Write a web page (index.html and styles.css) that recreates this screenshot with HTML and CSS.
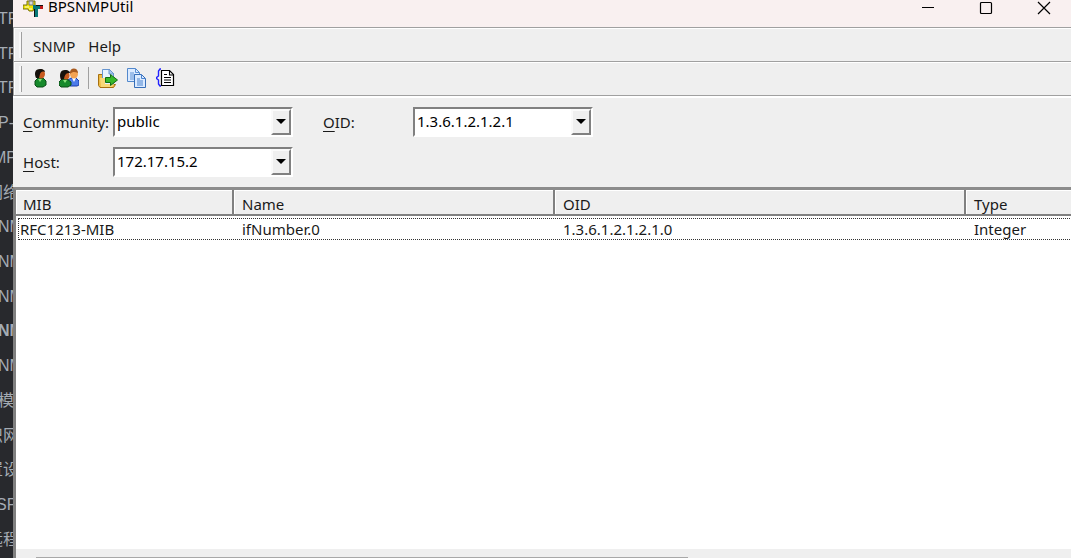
FILE: index.html
```html
<!DOCTYPE html>
<html lang="en">
<head>
  <meta charset="UTF-8">
  <meta name="viewport" content="width=device-width, initial-scale=1.0">
  <title>BPSNMPUtil</title>
  <link rel="stylesheet" href="styles.css">
</head>
<body>
  <ul class="backdrop">
    <li>TP</li>
    <li>TP</li>
    <li>TP</li>
    <li>P-</li>
    <li class="cut">MP</li>
    <li class="cjk">网络</li>
    <li>NM</li>
    <li>NM</li>
    <li>NM</li>
    <li class="active">NM</li>
    <li>NM</li>
    <li>模</li>
    <li class="cjk">识网</li>
    <li class="cjk">置设</li>
    <li class="cut-small">SP</li>
    <li class="cjk">远程</li>
  </ul>

  <main class="window">
    <header class="titlebar">
      <svg class="app-icon" viewBox="0 0 20 20" aria-hidden="true">
        <path d="M0 8h4V4h8v5l-2 5H6l-1-2H0z" fill="#f2e600" stroke="#77700d"/>
        <path d="M6 4h4v4H6z" fill="#d8d8d8" stroke="#777"/>
        <path d="M2 10h4M6 12h3" stroke="#fffbd0"/>
        <path d="M10 8h10v4h-5v8h-3v-8h-2z" fill="#087878"/>
        <path d="M13 8h7v1h-7zM11 12h1v8h-1z" fill="#101010"/>
        <path d="M17 9h3v3h-3z" fill="#c01818"/>
      </svg>
      <h1 class="title">BPSNMPUtil</h1>
      <button class="caption-btn" aria-label="Minimize">
        <svg viewBox="0 0 14 14"><path d="M1 6.500h12" stroke="#000"/></svg>
      </button>
      <button class="caption-btn" aria-label="Maximize">
        <svg viewBox="0 0 14 14"><rect x="1.500" y="1.500" width="11" height="11" rx="1" fill="none" stroke="#000" stroke-width="1.200"/></svg>
      </button>
      <button class="caption-btn" aria-label="Close">
        <svg viewBox="0 0 14 14"><path d="M1 1l12 12M13 1L1 13" stroke="#000" stroke-width="1.200"/></svg>
      </button>
    </header>

    <nav class="bar">
      <span class="grip"></span>
      <button class="menu-btn">SNMP</button>
      <button class="menu-btn">Help</button>
    </nav>

    <div class="bar">
      <span class="grip"></span>
      <button class="tool-btn" aria-label="Get">
        <svg viewBox="0 0 20 20">
          <path d="M5 17v-4l3-3h5l3 3v4l-3 2H7z" fill="#178a2c" stroke="#0b4d17"/>
          <path d="M8 11h4l-2 3z" fill="#8be07b"/>
          <ellipse cx="11" cy="6" rx="4" ry="4.500" fill="#c75b1f"/>
          <path d="M6 10c-2-5-1-9 4-9 4 0 5 2 5 3-3-1-4 0-5 2l-1 4z" fill="#16110c"/>
        </svg>
      </button>
      <button class="tool-btn" aria-label="Get all">
        <svg viewBox="0 0 20 20">
          <path d="M9 16v-4l3-2h5l3 3v4l-2 1h-7z" fill="#4b7bea" stroke="#1a3fad"/>
          <path d="M13 10h4l-2 4z" fill="#fff"/>
          <ellipse cx="15" cy="6" rx="4" ry="4.500" fill="#f4a352"/>
          <path d="M11 6c-1-7 8-7 8-1-3-1-5-2-8 1z" fill="#a85a1e"/>
          <path d="M0 17v-3l3-3h5l4 3v3l-3 2H2z" fill="#178a2c" stroke="#0b4d17"/>
          <path d="M4 12h4l-2 3z" fill="#8be07b"/>
          <ellipse cx="7" cy="7.500" rx="3.500" ry="4" fill="#c75b1f"/>
          <path d="M2 12c-2-5-1-10 4-10 4 0 5 2 5 3-4 0-5 1-6 6z" fill="#16110c"/>
        </svg>
      </button>
      <span class="separator"></span>
      <button class="tool-btn" aria-label="Export">
        <svg viewBox="0 0 20 20">
          <path d="M.5 6.500h4v10h13l-2 3H2l-1.500-2z" fill="#eebb45" stroke="#a7700f"/>
          <path d="M4.500 1.500h7l4 4v11h-11z" fill="#e8f3ff" stroke="#6795cf"/>
          <path d="M11 1v5h5z" fill="#a9c9f0" stroke="#6795cf"/>
          <path d="M2 10h5v6h9l-2 3H3z" fill="#f8d878"/>
          <path d="M7.500 9.500h5v-3l7 5.500-7 5.500v-3h-5z" fill="#36b928" stroke="#126c15"/>
        </svg>
      </button>
      <button class="tool-btn" aria-label="Copy">
        <svg viewBox="0 0 20 20">
          <path d="M.5.500h8l4 4v9H.500z" fill="#dcebff" stroke="#5288cc"/>
          <path d="M8.500.500v4h4M3 5h4M3 7h6M3 9h6M3 11h6" fill="none" stroke="#5c91d6"/>
          <path d="M7.500 6.500h7l4 4v9h-11z" fill="#dcebff" stroke="#376eb8"/>
          <path d="M14.500 6.500v4h4M10 11h3M10 13h6M10 15h6M10 17h6" fill="none" stroke="#4b83ce"/>
        </svg>
      </button>
      <button class="tool-btn" aria-label="View details">
        <svg viewBox="0 0 20 20">
          <path d="M5 1H4L2.500 3v5L0 10l2.500 2v4L4 18h1" fill="none" stroke="#2222ff" stroke-width="1.400"/>
          <path d="M5.500 2.500h8l4 4v11h-12z" fill="#fff" stroke="#000" stroke-width="1.200"/>
          <path d="M13.500 3v4h4M8 6.500h3M8 9.500h7M8 12h7M8 14.500h7" fill="none" stroke="#000" stroke-width="1.100"/>
        </svg>
      </button>
    </div>

    <form class="query">
      <label for="community"><u>C</u>ommunity:</label>
      <span class="combo">
        <select id="community"><option>public</option></select>
      </span>
      <label for="oid" class="label-oid"><u>O</u>ID:</label>
      <span class="combo">
        <select id="oid"><option>1.3.6.1.2.1.2.1</option></select>
      </span>
      <label for="host"><u>H</u>ost:</label>
      <span class="combo">
        <select id="host"><option>172.17.15.2</option></select>
      </span>
    </form>

    <section class="results">
      <table>
        <thead>
          <tr>
            <th>MIB</th>
            <th>Name</th>
            <th>OID</th>
            <th>Type</th>
          </tr>
        </thead>
        <tbody>
          <tr>
            <td>RFC1213-MIB</td>
            <td>ifNumber.0</td>
            <td>1.3.6.1.2.1.2.1.0</td>
            <td>Integer</td>
          </tr>
        </tbody>
      </table>
      <div class="scrollbar"><div class="thumb"></div></div>
    </section>
  </main>
</body>
</html>
```
FILE: styles.css
```css
* {
  box-sizing: border-box;
  margin: 0;
  padding: 0;
}

body {
  display: flex;
  height: 100vh;
  overflow: hidden;
  background: #28292d;
  color: #1a1a1a;
  font-family: "Noto Sans", Tahoma, "Noto Sans CJK SC", sans-serif;
  font-size: 15px;
  line-height: 20px;
}

button,
select {
  font: inherit;
  color: inherit;
  border: none;
  background: none;
}

/* Window behind, only its right edge shows */
.backdrop {
  width: 13px;
  flex-shrink: 0;
  padding: 9px 0 8px;
  display: flex;
  flex-direction: column;
  justify-content: space-between;
  overflow: hidden;
  list-style: none;
  white-space: nowrap;
  color: #a4abb3;
  font-family: "Liberation Sans", "Noto Sans CJK SC", sans-serif;
  font-size: 16px;
}

.backdrop li {
  margin-left: -2px;
}

.backdrop .cut {
  margin-left: -7px;
}

.backdrop .cut-small {
  margin-left: -4px;
}

.backdrop .cjk {
  margin-left: -13px;
}

.backdrop .active {
  font-weight: 700;
}

.window {
  flex: 1;
  min-width: 0;
  display: flex;
  flex-direction: column;
  background: #efefef;
}

/* Title bar */
.titlebar {
  display: flex;
  align-items: flex-start;
  height: 27px;
  padding-left: 10px;
  background: #f9f0f0;
}

.app-icon {
  width: 20px;
  height: 20px;
  margin-top: -3px;
}

.title {
  flex: 1;
  margin-left: 5px;
  font-size: 15px;
  font-weight: 400;
  line-height: 13px;
  color: #000;
}

.caption-btn {
  width: 54px;
  height: 16px;
  margin-left: 4px;
  display: flex;
  justify-content: center;
  align-items: center;
}

.caption-btn svg {
  width: 14px;
  height: 14px;
}

/* Menu and toolbar */
.bar {
  display: flex;
  align-items: center;
  height: 34px;
  padding: 4px 5px 3px;
  border-top: 1px solid #a0a0a0;
  border-left: 1px solid #a0a0a0;
  box-shadow: inset 1px 1px #fff;
}

.grip {
  width: 3px;
  height: 26px;
  margin-right: 8px;
  background: #f8f8f8;
  border-right: 1px solid #a0a0a0;
}

.menu-btn {
  padding: 1px 3px 0;
  margin-right: 7px;
}

.tool-btn {
  width: 20px;
  height: 20px;
  margin: 0 9px 3px 0;
}

.tool-btn svg {
  display: block;
  width: 20px;
  height: 20px;
}

.separator {
  width: 1px;
  height: 22px;
  margin: 0 9px 3px 0;
  background: #a0a0a0;
}

/* Query form */
.query {
  display: grid;
  grid-template-columns: 90px 180px 120px 180px;
  grid-auto-rows: 30px;
  row-gap: 10px;
  align-items: center;
  padding: 11px 10px 10px;
  border-top: 1px solid #a0a0a0;
  box-shadow: inset 0 2px #fff;
}

.query u {
  text-underline-offset: 3px;
}

.label-oid {
  padding-left: 30px;
}

.combo {
  position: relative;
  height: 30px;
  border: 2px solid;
  border-color: #808080 #fff #fff #808080;
}

.combo select {
  width: 100%;
  height: 100%;
  padding: 0 24px 2px 2px;
  appearance: none;
  background: #fff;
  color: #000;
  outline: none;
}

.combo::before {
  content: "";
  box-sizing: border-box;
  position: absolute;
  top: 0;
  right: 0;
  width: 20px;
  height: 26px;
  background: #efefef;
  border: 2px solid;
  border-color: #fafafa #808080 #808080 #fafafa;
  pointer-events: none;
  z-index: 1;
}

.combo::after {
  content: "";
  position: absolute;
  top: 10px;
  right: 5px;
  border: 5px solid transparent;
  border-top-color: #000;
  border-bottom: none;
  pointer-events: none;
  z-index: 2;
}

/* Results list */
.results {
  flex: 1;
  min-height: 0;
  display: flex;
  flex-direction: column;
  background: #fff;
  border: solid #808080;
  border-width: 3px 0 0 3px;
  border-top-color: #8c8c8c;
  overflow: hidden;
}

table {
  display: block;
  flex: 1;
}

thead,
tbody {
  display: block;
}

tr {
  display: grid;
  grid-template-columns: 218px 321px 411px 1fr;
}

th {
  height: 26px;
  padding: 4px 8px 0;
  text-align: left;
  font-weight: 400;
  line-height: 20px;
  background: #efefef;
  border-right: 2px solid #808080;
  border-bottom: 2px solid #808080;
  box-shadow: inset 1px 1px #fff;
}

th:first-child {
  padding-left: 7px;
}

th:last-child {
  border-right: none;
}

tbody tr {
  grid-template-columns: 215px 321px 411px 1fr;
  margin: 2px -3px 0 2px;
  border: 1px dotted #333;
}

tbody td {
  padding: 0 8px;
}

tbody td:first-child {
  padding-left: 1px;
}

.scrollbar {
  height: 9px;
  padding: 8px 0 0 20px;
  background: #efefef;
}

.thumb {
  width: 63%;
  height: 1px;
  background: #a8a8a8;
}
```
